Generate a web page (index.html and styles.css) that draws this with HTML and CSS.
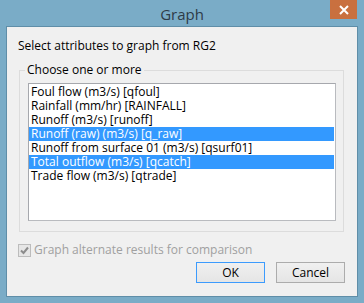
FILE: index.html
```html
<!DOCTYPE html>
<html lang="en">
<head>
    <meta charset="UTF-8">
    <title>Graph</title>
    <link rel="stylesheet" href="styles.css">
</head>
<body>
    <div class="window">
        <!-- title bar -->
        <div class="titlebar">
            <span class="title">Graph</span>
            <div class="close-btn">
                <svg width="10" height="10" viewBox="0 0 10 10">
                    <path d="M1 1 L9 9 M9 1 L1 9" stroke="#fff" stroke-width="2"/>
                </svg>
            </div>
        </div>

        <div class="client">
            <div class="prompt">Select attributes to graph from RG2</div>

            <fieldset class="group">
                <legend>Choose one or more</legend>
                <ul class="listbox">
                    <li>Foul flow (m3/s) [qfoul]</li>
                    <li>Rainfall (mm/hr) [RAINFALL]</li>
                    <li>Runoff (m3/s) [runoff]</li>
                    <li class="selected">Runoff (raw) (m3/s) [q_raw]</li>
                    <li>Runoff from surface 01 (m3/s) [qsurf01]</li>
                    <li class="selected">Total outflow (m3/s) [qcatch]</li>
                    <li>Trade flow (m3/s) [qtrade]</li>
                </ul>
            </fieldset>

            <div class="check-row">
                <span class="checkbox">
                    <svg width="11" height="11" viewBox="0 0 11 11">
                        <path d="M2 5.5 L4.5 8 L9 2.5" stroke="#8c8c8c" stroke-width="2" fill="none"/>
                    </svg>
                </span>
                <span class="check-label">Graph alternate results for comparison</span>
            </div>

            <div class="buttons">
                <button class="btn default">OK</button>
                <button class="btn">Cancel</button>
            </div>
        </div>
    </div>
</body>
</html>
```

FILE: styles.css
```css
body {
    margin: 0;
    font-family: "Segoe UI", "Open Sans", sans-serif;
    font-size: 12px;
}
.window {
    width: 364px;
    height: 303px;
    box-sizing: border-box;
    background-color: #7aacc7;
    padding: 0 6px 6px;
    display: flex;
    flex-direction: column;
}
.titlebar {
    height: 26px;
    position: relative;
    display: flex;
    justify-content: center;
    align-items: center;
}
.title {
    font-size: 15px;
    color: #2e3b48;
    margin-top: 1px;
}
.close-btn {
    position: absolute;
    top: 0;
    right: 1px;
    width: 27px;
    height: 19px;
    background-color: #c9703f;
    display: flex;
    justify-content: center;
    align-items: center;
}
.client {
    flex: 1;
    background-color: #f0f0f0;
    border: 1px solid #5f8ea8;
    display: flex;
    flex-direction: column;
}
.prompt {
    line-height: 16px;
    margin: 11px 0 0 11px;
    color: #000;
}
.group {
    margin: 8px 13px 0 12px;
    padding: 5px 7px 10px 8px;
    border: 1px solid #dcdcdc;
    min-width: 0;
}
.group legend {
    padding: 0 2px;
    margin-left: -3px;
    line-height: 16px;
}
.listbox {
    list-style: none;
    margin: 0;
    padding: 1px 1px 1px 0;
    height: 134px;
    background-color: #fff;
    border: 1px solid #a6a8ad;
    border-right-color: #b9bbbf;
    border-bottom-color: #b9bbbf;
}
.listbox li {
    height: 14px;
    line-height: 14px;
    padding-left: 2px;
    white-space: nowrap;
}
.listbox li.selected {
    background-color: #3399ff;
    color: #fff;
}
.check-row {
    display: flex;
    align-items: center;
    margin: 11px 0 0 11px;
    gap: 3px;
}
.checkbox {
    width: 11px;
    height: 11px;
    border: 1px solid #bcbcbc;
    background-color: #e6e6e6;
    display: flex;
}
.check-label {
    color: #a0a0a0;
    line-height: 14px;
}
.buttons {
    display: flex;
    justify-content: flex-end;
    gap: 11px;
    margin-top: auto;
    padding: 0 12px 13px 0;
}
.btn {
    width: 69px;
    height: 21px;
    font-family: inherit;
    font-size: 12px;
    color: #000;
    padding: 0;
    border: 1px solid #acacac;
    background: linear-gradient(#f0f0f0, #e5e5e5);
}
.btn.default {
    border-color: #3c9bfd;
}
```
